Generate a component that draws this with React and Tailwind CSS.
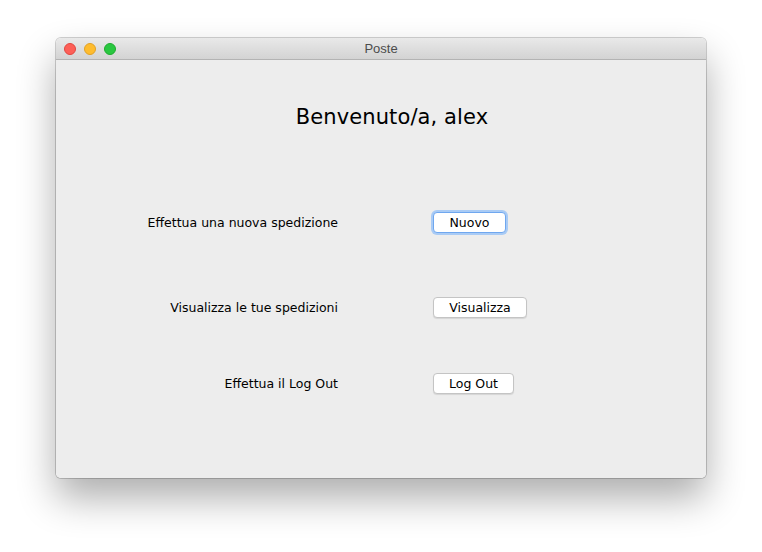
export default function App() {
  const rows = [
    { label: 'Effettua una nuova spedizione', button: 'Nuovo', w: 'w-[73px]', focus: true, mt: 'mt-[81px]' },
    { label: 'Visualizza le tue spedizioni', button: 'Visualizza', w: 'w-[94px]', focus: false, mt: 'mt-[64px]' },
    { label: 'Effettua il Log Out', button: 'Log Out', w: 'w-[81px]', focus: false, mt: 'mt-[55px]' },
  ];

  return (
    <div className="w-[762px] h-[552px] bg-white overflow-hidden">
      <div className="ml-[56px] mt-[38px] w-[650px] h-[440px] rounded-[5px] overflow-hidden flex flex-col shadow-[0_0_0_1px_rgba(0,0,0,0.18),0_20px_38px_rgba(0,0,0,0.32)]">
        {/* title bar */}
        <div className="relative h-[22px] flex items-center justify-center bg-gradient-to-b from-[#e9e9e9] to-[#d3d3d3] border-b border-[#b3b3b3]">
          <div className="absolute left-[8px] top-[5px] flex gap-[8px]">
            <span className="w-[12px] h-[12px] rounded-full bg-[#fd5f57] border border-[#e1463f]" />
            <span className="w-[12px] h-[12px] rounded-full bg-[#febc2e] border border-[#e0a126]" />
            <span className="w-[12px] h-[12px] rounded-full bg-[#29c740] border border-[#1eab2e]" />
          </div>
          <span className="text-[13px] text-[#4c4c4c] font-['Liberation_Sans',sans-serif]">Poste</span>
        </div>

        {/* content */}
        <div className="flex-1 bg-[#ededed] flex flex-col font-['DejaVu_Sans',sans-serif] text-black">
          <div className="mt-[43px] pl-[22px] text-center text-[21px] leading-[28px] tracking-[0.1px]">
            Benvenuto/a, alex
          </div>

          {rows.map((r) => (
            <div key={r.label} className={`flex items-center ${r.mt}`}>
              <div className="w-[282px] text-right text-[12.5px] leading-[16px]">{r.label}</div>
              <div className="ml-[95px]">
                <button
                  className={`${r.w} h-[21px] flex items-center justify-center bg-white rounded-[4px] text-[12.5px] leading-[16px] ${
                    r.focus
                      ? 'border border-[#6fa7ef] ring-2 ring-[#a9cbf5]'
                      : 'border border-[#c4c4c4] shadow-[0_1px_1px_rgba(0,0,0,0.1)]'
                  }`}
                >
                  {r.button}
                </button>
              </div>
            </div>
          ))}
        </div>
      </div>
    </div>
  );
}
